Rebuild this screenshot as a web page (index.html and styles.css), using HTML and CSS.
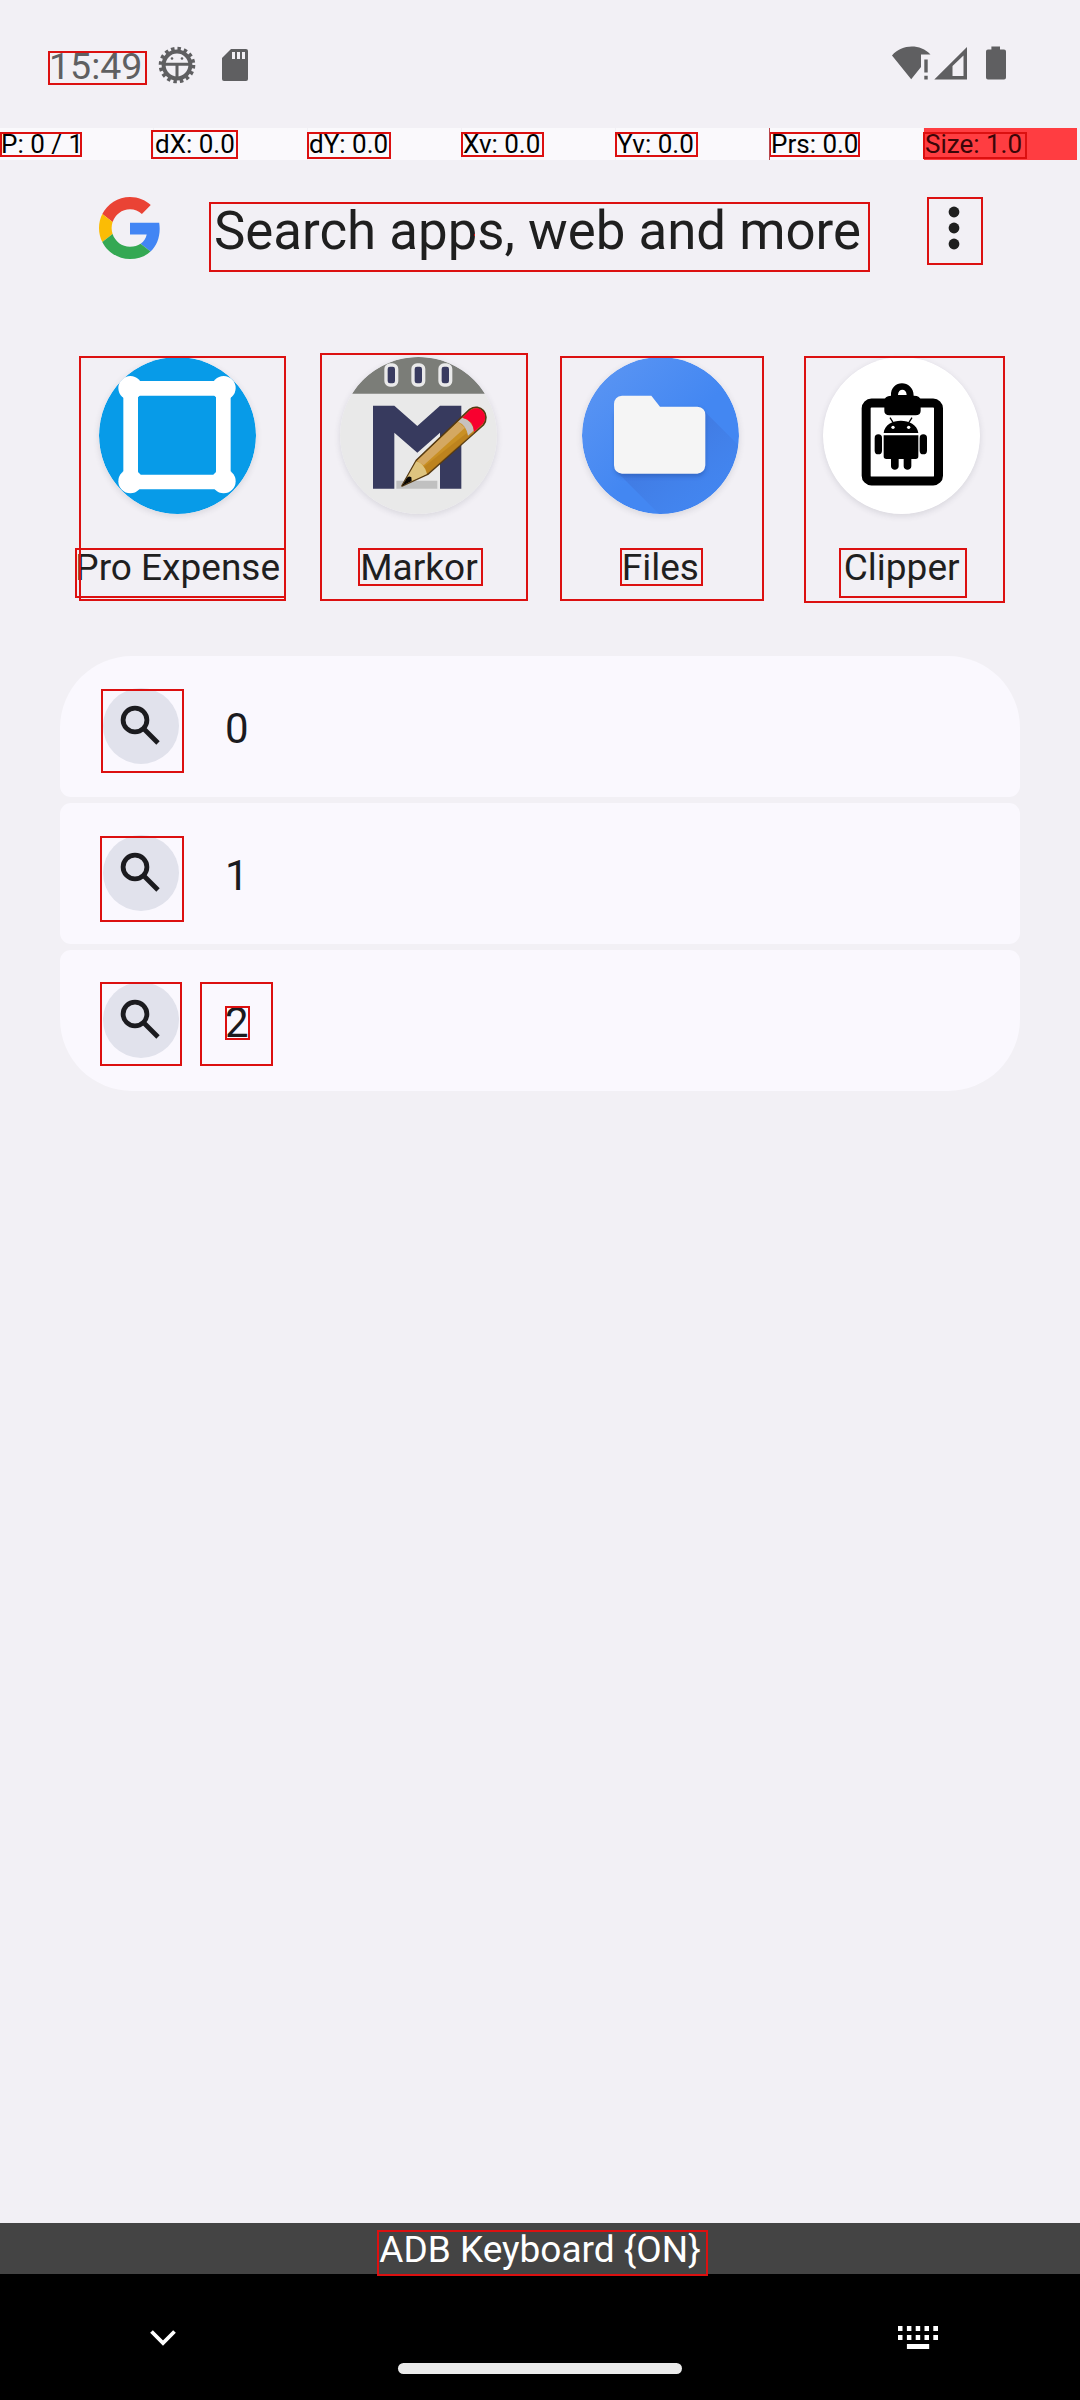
FILE: index.html
```html
<!DOCTYPE html>
<html lang="en">
<head>
<meta charset="utf-8">
<title>Search</title>
<link rel="stylesheet" href="styles.css">
</head>
<body>
<div class="screen">
  <header class="status">
    <span class="clock">15:49</span>
    <svg class="debug-icon" width="38" height="38" viewBox="0 0 38 38">
      <circle cx="19" cy="19" r="16.3" fill="none" stroke="#5f5f61" stroke-width="4" stroke-dasharray="3.4 3"/>
      <circle cx="19" cy="19" r="13.400" fill="none" stroke="#5f5f61" stroke-width="4"/>
      <path d="M6 18.300h26M19 18.300v14" stroke="#5f5f61" stroke-width="3"/>
      <circle cx="14" cy="12.500" r="1.300" fill="#5f5f61"/><circle cx="24" cy="12.500" r="1.300" fill="#5f5f61"/>
    </svg>
    <svg class="sd-icon" width="26" height="32" viewBox="0 0 26 32">
      <path d="M9 0h15q2 0 2 2v28q0 2-2 2H2q-2 0-2-2V9z" fill="#5f5f61"/>
      <path d="M10 3h3v7h-3zM15 3h3v7h-3zM20 3h3v7h-3z" fill="#f2f0f5"/>
    </svg>
    <svg class="signals" width="116" height="34" viewBox="891 46.500 116 34" fill="#5f5f61">
      <path d="M892 56C902 44.500 920 44 930.500 55H921V67.500L911.200 79.700z"/>
      <path d="M924.300 60h3.400v13h-3.400zM924.300 76.300h3.400v3.700h-3.400z"/>
      <path fill-rule="evenodd" d="M934.300 80L967 47.500V80zM952.500 76.500h11V56L952.500 66.500z"/>
      <path d="M991.400 47h8.600v3h4q2 0 2 2v26q0 2-2 2h-16q-2 0-2-2V52q0-2 2-2h3.400z"/>
    </svg>
  </header>

  <div class="pointer">
    <span>P: 0 / 1</span><span>dX: 0.0</span><span>dY: 0.0</span><span>Xv: 0.0</span><span>Yv: 0.0</span><span>Prs: 0.0</span><span class="hot">Size: 1.0</span>
  </div>

  <div class="search">
    <svg class="glogo" width="62" height="62" viewBox="0 0 48 48">
      <path fill="#EA4335" d="M24 9.500c3.540 0 6.710 1.220 9.210 3.600l6.850-6.850C35.900 2.380 30.470 0 24 0 14.620 0 6.510 5.380 2.560 13.220l7.980 6.190C12.430 13.720 17.740 9.500 24 9.500z"/>
      <path fill="#4285F4" d="M46.980 24.550c0-1.570-.15-3.090-.38-4.550H24v9.020h12.940c-.58 2.960-2.260 5.480-4.780 7.180l7.730 6c4.510-4.180 7.090-10.360 7.090-17.650z"/>
      <path fill="#FBBC05" d="M10.530 28.590c-.48-1.450-.76-2.990-.76-4.590s.27-3.140.76-4.590l-7.980-6.190C.920 16.460 0 20.120 0 24c0 3.880.920 7.540 2.560 10.780l7.970-6.190z"/>
      <path fill="#34A853" d="M24 48c6.480 0 11.930-2.130 15.890-5.810l-7.730-6c-2.150 1.450-4.920 2.300-8.160 2.300-6.260 0-11.570-4.220-13.470-9.910l-7.980 6.190C6.510 42.620 14.620 48 24 48z"/>
    </svg>
    <span class="prompt">Search apps, web and more</span>
    <svg class="kebab" width="12" height="44" viewBox="0 0 12 44" fill="#1f1f1f"><circle cx="6" cy="6" r="5.400"/><circle cx="6" cy="22" r="5.400"/><circle cx="6" cy="38" r="5.400"/></svg>
  </div>

  <main>
    <div class="apps">
      <div class="app">
        <svg class="disc" viewBox="117 52 471 471">
          <circle cx="352.500" cy="287.500" r="235.500" fill="#079be8"/>
          <path d="M212 146H490V427H212z" fill="none" stroke="#fff" stroke-width="44"/>
          <g fill="#fff"><circle cx="211" cy="145" r="36"/><circle cx="491" cy="145" r="36"/><circle cx="211" cy="425" r="36"/><circle cx="491" cy="425" r="36"/></g>
        </svg>
        <span class="name">Pro Expense</span>
      </div>
      <div class="app">
        <svg class="disc" viewBox="89 52 471 471">
          <circle cx="324.500" cy="287.500" r="235.500" fill="#e9e9e9"/>
          <path d="M125 162A235.500 235.500 0 0 1 524 162z" fill="#7b7d78"/>
          <g fill="#393b60" stroke="#e9e9e9" stroke-width="10"><rect x="227" y="76" width="32" height="60" rx="12"/><rect x="308" y="76" width="32" height="60" rx="12"/><rect x="389" y="76" width="32" height="60" rx="12"/></g>
          <path d="M258 423H381V447H258z" fill="#c0c0c0"/>
          <path d="M188 198H252L321 259L389 198H453V447H389V279L321 339L252 279V447H188z" fill="#373a5e"/>
          <path d="M275 439L318 362L478 209C510 188 542 225 519 256L352 404z" fill="#c99024" stroke="#553a13" stroke-width="5" stroke-linejoin="round"/>
          <path d="M320 363L443 246L464 264L340 377z" fill="#d4a862"/>
          <path d="M352 402L340 382L473 277L492 279z" fill="#b67c1a" opacity=".6"/>
          <path d="M318 365Q342 371 350 403L277 437z" fill="#dec47f"/>
          <path d="M443 246L456 234Q484 241 491 272L473 288Q468 256 443 246z" fill="#c7c1bf"/>
          <path d="M456 234L479 212C509 191 539 226 517 253L491 277Q489 241 456 234z" fill="#f8002f"/>
          <path d="M275 439L289 416Q294 407 303 413L304 424z" fill="#090603"/>
        </svg>
        <span class="name">Markor</span>
      </div>
      <div class="app">
        <svg class="disc" viewBox="97 52 471 471">
          <defs>
            <linearGradient id="blue" x1="0" y1="0" x2="1" y2="1"><stop offset="0.100" stop-color="#5994f3"/><stop offset="0.550" stop-color="#4387f2"/><stop offset="1" stop-color="#4387f2"/></linearGradient>
            <linearGradient id="shade" x1="0" y1="0" x2="1" y2="1"><stop offset="0.400" stop-color="#4076dc" stop-opacity=".6"/><stop offset="0.850" stop-color="#4285ef" stop-opacity=".2"/></linearGradient>
            <clipPath id="round"><circle cx="332.500" cy="287.500" r="235.500"/></clipPath>
            <filter id="soft" x="-20%" y="-20%" width="140%" height="140%"><feGaussianBlur stdDeviation="7"/></filter>
          </defs>
          <circle cx="332.500" cy="287.500" r="235.500" fill="url(#blue)"/>
          <path clip-path="url(#round)" d="M199 394L340 535H620V370L460 210z" fill="url(#shade)"/>
          <rect x="196" y="208" width="270" height="202" rx="24" fill="#2450a4" opacity=".5" filter="url(#soft)"/>
          <path d="M217 168H305L331 201H443Q467 203 467 226V377Q465 400 443 402H217Q194 400 193 377V193Q194 170 217 168z" fill="#f5f5f5"/>
        </svg>
        <span class="name">Files</span>
      </div>
      <div class="app">
        <svg class="disc" viewBox="99 52 471 471">
          <circle cx="334.500" cy="287.500" r="235.500" fill="#fff"/>
          <rect x="228.500" y="190" width="217" height="234" rx="16" fill="none" stroke="#000" stroke-width="27"/>
          <path fill-rule="evenodd" d="M303 168C300 118 371 118 371 168Q392 168 392 184V214Q391 227 377 227H298Q283 226 283 214V184Q283 169 303 168zM324 166H350C350 145 324 145 324 166z"/>
          <path d="M281 280C285 232 378 230 385 280zM281 287H385V350Q385 358 377 358H364V380C364 394 341 394 341 380V358H326V380C326 394 303 394 303 380V358H289Q281 358 281 350z"/>
          <path d="M300 234L311 251M366 234L355 251" stroke="#000" stroke-width="4"/>
          <rect x="254" y="284" width="22" height="60" rx="11"/><rect x="389" y="284" width="22" height="60" rx="11"/>
          <circle cx="309" cy="263" r="5" fill="#fff"/><circle cx="356" cy="263" r="5" fill="#fff"/>
        </svg>
        <span class="name">Clipper</span>
      </div>
    </div>

    <div class="results">
      <div class="row"><span class="glass"><svg width="40" height="40" viewBox="0 0 40 40"><g fill="none" stroke="#1b1b1f" stroke-width="4.800"><circle cx="15" cy="15" r="11.900"/><path d="M23.500 23.500L38 38"/></g></svg></span><span>0</span></div>
      <div class="row"><span class="glass"><svg width="40" height="40" viewBox="0 0 40 40"><g fill="none" stroke="#1b1b1f" stroke-width="4.800"><circle cx="15" cy="15" r="11.900"/><path d="M23.500 23.500L38 38"/></g></svg></span><span>1</span></div>
      <div class="row"><span class="glass"><svg width="40" height="40" viewBox="0 0 40 40"><g fill="none" stroke="#1b1b1f" stroke-width="4.800"><circle cx="15" cy="15" r="11.900"/><path d="M23.500 23.500L38 38"/></g></svg></span><span>2</span></div>
    </div>
  </main>

  <div class="ime"><span>ADB Keyboard {ON}</span></div>
  <nav class="navbar">
    <svg class="chevron" width="28" height="18" viewBox="0 0 28 18"><path d="M2.500 2.500L14 14L25.500 2.500" fill="none" stroke="#fff" stroke-width="3.800"/></svg>
    <span class="pill"></span>
    <svg class="keys" width="40" height="23" viewBox="0 0 40 23" fill="#fff"><path d="M0 0h4.500v5H0zM8.900 0h4.500v5H8.900zM17.700 0h4.500v5h-4.500zM26.500 0h4.500v5h-4.500zM35.300 0h4.700v5h-4.700zM0 9h4.500v5H0zM8.900 9h4.500v5H8.900zM17.700 9h4.500v5h-4.500zM26.500 9h4.500v5h-4.500zM35.300 9h4.700v5h-4.700zM8.900 18h22.300v5H8.900z"/></svg>
  </nav>

  <!-- element bounds, drawn over the interface -->
  <svg class="bounds" width="1080" height="2400" viewBox="0 0 1080 2400">
    <rect x="49" y="52" width="97" height="32"/>
    <rect x="1" y="133" width="80" height="23"/>
    <rect x="152" y="131" width="85" height="27"/>
    <rect x="308" y="133" width="82" height="25"/>
    <rect x="462" y="133" width="81" height="23"/>
    <rect x="616" y="133" width="81" height="23"/>
    <rect x="770" y="133" width="89" height="23"/>
    <rect x="924" y="133" width="102" height="25"/>
    <rect x="210" y="203" width="659" height="68"/>
    <rect x="928" y="198" width="54" height="66"/>
    <rect x="80" y="357" width="205" height="243"/>
    <rect x="76" y="549" width="209" height="48"/>
    <rect x="321" y="354" width="206" height="246"/>
    <rect x="359" y="549" width="123" height="36"/>
    <rect x="561" y="357" width="202" height="243"/>
    <rect x="621" y="549" width="81" height="36"/>
    <rect x="805" y="357" width="199" height="245"/>
    <rect x="840" y="549" width="126" height="48"/>
    <rect x="102" y="690" width="81" height="82"/>
    <rect x="101" y="837" width="82" height="84"/>
    <rect x="101" y="983" width="80" height="82"/>
    <rect x="201" y="983" width="71" height="82"/>
    <rect x="226" y="1007" width="23" height="32"/>
    <rect x="378" y="2231" width="329" height="44"/>
    <path d="M474 235h1"/>
    <path d="M769.500 128v32" stroke="#b8474d" stroke-width="1"/>
  </svg>
</div>
</body>
</html>
```
FILE: styles.css
```css
* { box-sizing: border-box; }
body { margin: 0; background: #f2f0f5; font-family: Roboto, sans-serif; color: #1f1f1f; }
svg { display: block; flex: none; }
.screen { position: relative; width: 1080px; height: 2400px; display: flex; flex-direction: column; overflow: hidden; }
.bounds { position: absolute; left: 0; top: 0; fill: none; stroke: #dc1010; stroke-width: 2; pointer-events: none; }

.status { height: 128px; display: flex; align-items: flex-start; padding: 46px 73px 0 49px; color: #5f5f61; }
.clock { width: 109px; font-size: 37.5px; line-height: 40px; }
.debug-icon { margin-right: 26px; }
.sd-icon { margin-top: 3px; }
.signals { margin-left: auto; }

.pointer { height: 32px; display: grid; grid-template-columns: repeat(7, 153px); gap: 1px; font-size: 26px; line-height: 32px; color: #000; }
.pointer span { background: #faf9fc; padding-left: 1px; white-space: nowrap; }
.pointer .hot { background: #ff3d41; color: #3a0608; }

.search { height: 196px; display: flex; align-items: flex-start; padding: 37px 120px 0 99px; }
.prompt { margin-left: 53px; font-size: 52.8px; line-height: 68px; white-space: nowrap; }
.kebab { margin: 9px 0 0 auto; }

main { flex: 1; }
.apps { display: grid; grid-template-columns: repeat(4, 241.330px); margin-left: 57px; height: 300px; }
.app { display: flex; flex-direction: column; align-items: center; padding-top: 1px; }
.disc { width: 157px; height: 157px; border-radius: 50%; box-shadow: 0 2px 6px rgba(60, 60, 80, .14); }
.name { margin-top: 32px; font-size: 37px; line-height: 44px; white-space: nowrap; }

.results { display: flex; flex-direction: column; gap: 6px; padding: 0 60px; }
.row { height: 141px; display: flex; align-items: flex-start; gap: 46px; padding: 32px 43px; background: #faf8fe; border-radius: 11px; font-size: 42px; line-height: 82px; color: #1b1b1f; }
.row:first-child { border-radius: 72px 72px 11px 11px; }
.row:last-child { border-radius: 11px 11px 72px 72px; }
.glass { width: 76px; height: 76px; border-radius: 50%; background: #e1e2ec; padding: 17px; }

.ime { height: 51px; display: flex; justify-content: center; background: #444; color: #fff; font-size: 37px; line-height: 54px; }
.navbar { height: 126px; display: flex; align-items: flex-start; background: #000; padding: 0 142px 0 149px; }
.chevron { margin-top: 55px; }
.pill { width: 284px; height: 11px; margin: 89px 0 0 221px; border-radius: 6px; background: #ebebeb; }
.keys { margin: 52px 0 0 auto; }
```
